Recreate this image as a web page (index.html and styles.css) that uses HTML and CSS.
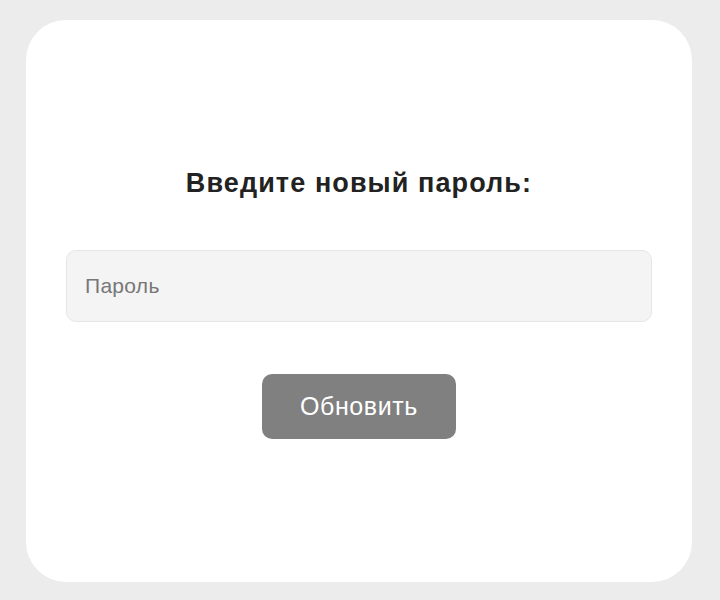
FILE: index.html
```html
<!DOCTYPE html>
<html lang="ru">
<head>
<meta charset="utf-8">
<link rel="stylesheet" href="styles.css">
</head>
<body>
<main class="card">
  <h1 class="title">Введите новый пароль:</h1>
  <input class="field" type="password" placeholder="Пароль">
  <button class="btn" type="button">Обновить</button>
</main>
</body>
</html>
```
FILE: styles.css
```css
html, body {
  margin: 0;
  padding: 0;
  background: #ececec;
  font-family: "Liberation Sans", Arial, sans-serif;
}
body {
  padding: 20px 28px 18px 26px;
}
.card {
  box-sizing: border-box;
  height: 562px;
  background: #ffffff;
  border-radius: 40px;
  padding: 0 40px;
  display: flex;
  flex-direction: column;
  align-items: center;
}
.title {
  margin: 148px 0 0;
  font-size: 27px;
  line-height: 30px;
  font-weight: bold;
  letter-spacing: 1.1px;
  color: #222222;
}
.field {
  box-sizing: border-box;
  width: 100%;
  height: 72px;
  margin-top: 52px;
  padding: 0 18px;
  background: #f4f4f4;
  border: 1px solid #e6e6e6;
  border-radius: 10px;
  font-family: inherit;
  font-size: 21px;
  letter-spacing: 0.3px;
  color: #333;
  outline: none;
}
.field::placeholder {
  color: #777777;
}
.btn {
  margin-top: 52px;
  width: 194px;
  height: 65px;
  background: #808080;
  color: #ffffff;
  border: none;
  border-radius: 10px;
  font-family: inherit;
  font-size: 25px;
  letter-spacing: 0.6px;
}
```
